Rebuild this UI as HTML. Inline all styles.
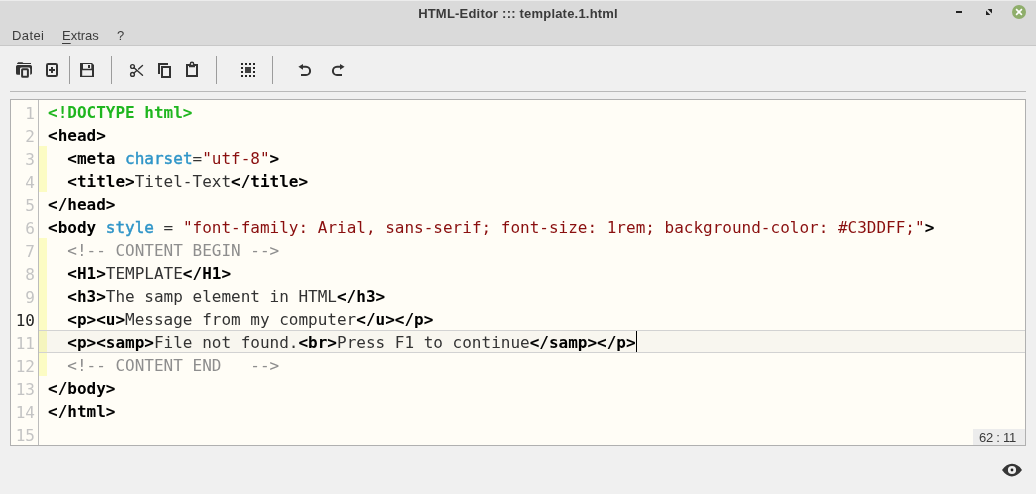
<!DOCTYPE html>
<html><head><meta charset="utf-8">
<style>
html,body{margin:0;padding:0;}
body{width:1036px;height:494px;background:#f0f0f0;position:relative;overflow:hidden;font-family:"Liberation Sans",sans-serif;}
#top{position:absolute;left:0;top:0;width:1036px;height:45px;background:#dadada;border-bottom:1px solid #c8c8c8;box-shadow:inset 0 1px 0 #ececec;}
#title{position:absolute;left:0;width:1036px;top:6px;letter-spacing:0.2px;text-align:center;font-weight:bold;font-size:13px;color:#3a3a3a;line-height:16px;}
.menu{position:absolute;top:28px;font-size:13px;color:#3c3c3c;line-height:16px;}
.sep{position:absolute;width:1px;background:#9c9c9c;top:56px;height:28px;}
#hr{position:absolute;left:10px;top:91px;width:1016px;height:1px;background:#b9b9b9;}
#ed{position:absolute;left:10px;top:99px;width:1014px;height:345px;border:1px solid #b0b0b0;background:#fffdf6;}
#gut{position:absolute;left:0;top:0;width:27px;height:345px;border-right:1px solid #bcbcbc;background:#fffdf6;}
.ln{position:absolute;margin-top:1px;left:0;width:24px;text-align:right;font-family:"DejaVu Sans Mono",monospace;font-size:16px;line-height:23px;color:#c4c4c4;height:23px;}
.ln.cur{color:#222;}
.mk{position:absolute;left:28px;width:8px;background:#fcfcc4;}
.l{position:absolute;left:37px;height:23px;line-height:23px;white-space:pre;font-family:"DejaVu Sans Mono",monospace;font-size:16px;color:#333;}
.t{font-weight:bold;color:#000;}
.d{font-weight:bold;color:#1fb61f;}
.a{color:#2f95c8;-webkit-text-stroke:0.45px #2f95c8;}
.s{color:#8a0f0f;}
.c{color:#8e8e8e;}
#curline{position:absolute;left:28px;top:230px;width:986px;height:21px;background:rgba(0,0,0,0.028);border-top:1px solid #d2d2d2;border-bottom:1px solid #d2d2d2;}
#caret{position:absolute;left:625px;top:231px;width:1px;height:21px;background:#000;}
#pos{position:absolute;right:0;bottom:0;width:52px;height:16px;background:#ececec;font-size:13px;letter-spacing:-0.25px;line-height:18px;box-sizing:border-box;padding-right:3px;overflow:hidden;text-align:center;color:#3a3a3a;}
svg{position:absolute;}
#wrap{position:absolute;left:0;top:0;width:1036px;height:494px;will-change:transform;}
</style></head><body>
<div id="wrap">
<div id="top">
<div id="title">HTML-Editor ::: template.1.html</div>
<div class="menu" style="left:12px;letter-spacing:0.4px">Datei</div>
<div class="menu" style="left:62px"><u style="text-underline-offset:3px">E</u>xtras</div>
<div class="menu" style="left:117px">?</div>
</div>
<div class="sep" style="left:69px"></div>
<div class="sep" style="left:111px"></div>
<div class="sep" style="left:216px"></div>
<div class="sep" style="left:272px"></div>
<div id="hr"></div>
<div id="ed">
<div id="gut"></div>
<div class="mk" style="top:46px;height:46px"></div>
<div class="mk" style="top:138px;height:138px"></div>
<div id="curline"></div>
<div class="ln" style="top:1px">1</div>
<div class="ln" style="top:24px">2</div>
<div class="ln" style="top:47px">3</div>
<div class="ln" style="top:70px">4</div>
<div class="ln" style="top:93px">5</div>
<div class="ln" style="top:116px">6</div>
<div class="ln" style="top:139px">7</div>
<div class="ln" style="top:162px">8</div>
<div class="ln" style="top:185px">9</div>
<div class="ln cur" style="top:208px">10</div>
<div class="ln" style="top:231px">11</div>
<div class="ln" style="top:254px">12</div>
<div class="ln" style="top:277px">13</div>
<div class="ln" style="top:300px">14</div>
<div class="ln" style="top:323px">15</div>
<div class="l" style="top:1px"><span class="d">&lt;!DOCTYPE html&gt;</span></div>
<div class="l" style="top:24px"><span class="t">&lt;head&gt;</span></div>
<div class="l" style="top:47px">  <span class="t">&lt;meta</span> <span class="a">charset</span>=<span class="s">"utf-8"</span><span class="t">&gt;</span></div>
<div class="l" style="top:70px">  <span class="t">&lt;title&gt;</span>Titel-Text<span class="t">&lt;/title&gt;</span></div>
<div class="l" style="top:93px"><span class="t">&lt;/head&gt;</span></div>
<div class="l" style="top:116px"><span class="t">&lt;body</span> <span class="a">style</span> = <span class="s">"font-family: Arial, sans-serif; font-size: 1rem; background-color: #C3DDFF;"</span><span class="t">&gt;</span></div>
<div class="l" style="top:139px">  <span class="c">&lt;!-- CONTENT BEGIN --&gt;</span></div>
<div class="l" style="top:162px">  <span class="t">&lt;H1&gt;</span>TEMPLATE<span class="t">&lt;/H1&gt;</span></div>
<div class="l" style="top:185px">  <span class="t">&lt;h3&gt;</span>The samp element in HTML<span class="t">&lt;/h3&gt;</span></div>
<div class="l" style="top:208px">  <span class="t">&lt;p&gt;&lt;u&gt;</span>Message from my computer<span class="t">&lt;/u&gt;&lt;/p&gt;</span></div>
<div class="l" style="top:231px">  <span class="t">&lt;p&gt;&lt;samp&gt;</span>File not found.<span class="t">&lt;br&gt;</span>Press F1 to continue<span class="t">&lt;/samp&gt;&lt;/p&gt;</span></div>
<div class="l" style="top:254px">  <span class="c">&lt;!-- CONTENT END   --&gt;</span></div>
<div class="l" style="top:277px"><span class="t">&lt;/body&gt;</span></div>
<div class="l" style="top:300px"><span class="t">&lt;/html&gt;</span></div>
<div id="caret"></div>
<div id="pos">62 : 11</div>
</div>

<svg id="icons" style="left:0;top:0" width="1036" height="494" viewBox="0 0 1036 494">
<g fill="#333" stroke="none">
<!-- open -->
<path d="M17 63.6 L18.2 62.2 H22.4 L23.4 63 H31 V64 H17 Z"/>
<path d="M17.6 65 H30.4 Q32 65 32 66.6 V73.2 Q32 74.6 30.2 74.8 V69 Q30.2 67.6 28.8 67.6 H21.4 Q20 67.6 20 69 V74.8 H17.6 Q16 74.8 16 73.2 V66.6 Q16 65 17.6 65 Z"/>
<rect x="22.1" y="69.2" width="5.8" height="7.6" rx="0.6" fill="none" stroke="#333" stroke-width="2"/>
<!-- new -->
<rect x="47" y="64" width="10" height="12" rx="1.2" fill="none" stroke="#333" stroke-width="2"/>
<rect x="49" y="69" width="6" height="2"/>
<rect x="51" y="67" width="2" height="6"/>
<!-- save -->
<path fill-rule="evenodd" d="M80 63 H92 L94 65 V77 H80 Z M83 64 V68.8 H91.3 V64 Z M82.2 70.2 V75.8 H92 V70.2 Z"/>
<rect x="88" y="65" width="2" height="3"/>
<!-- cut -->
<g fill="none" stroke="#333" stroke-width="1.4">
<circle cx="132.5" cy="66.5" r="1.9"/>
<circle cx="132.5" cy="74.4" r="1.9"/>
<path d="M134 67.8 L142.5 75.3" stroke-linecap="round"/>
<path d="M134 73.1 L136.8 70.6 M138.6 69 L142.5 65.5" stroke-linecap="round"/>
</g>
<!-- copy -->
<path d="M158 63 H168 V65 H160 V74 H158 Z"/>
<rect x="162" y="67" width="8" height="10" fill="none" stroke="#333" stroke-width="2"/>
<!-- paste -->
<path fill-rule="evenodd" d="M186 64 H189.6 A2.4 2.4 0 0 1 194.4 64 H198 V77 H186 Z M188 66 V75 H196 V66 H195 V67.2 H189 V66 Z M191 63.9 A1 1 0 0 0 193 63.9 A1 1 0 0 0 191 63.9 Z"/>
<!-- select all -->
<g fill="#262626">
<rect x="241" y="63" width="2" height="2"/><rect x="245" y="63" width="2" height="2"/><rect x="249" y="63" width="2" height="2"/><rect x="253" y="63" width="2" height="2"/>
<rect x="241" y="67" width="2" height="2"/><rect x="253" y="67" width="2" height="2"/>
<rect x="241" y="71" width="2" height="2"/><rect x="253" y="71" width="2" height="2"/>
<rect x="241" y="75" width="2" height="2"/><rect x="245" y="75" width="2" height="2"/><rect x="249" y="75" width="2" height="2"/><rect x="253" y="75" width="2" height="2"/>
</g>
<rect x="245" y="67" width="6" height="6" fill="#404040"/>
<!-- undo -->
<path d="M301 75 H306 A4.1 4.1 0 0 0 306 66.8 H302.5" fill="none" stroke="#333" stroke-width="2"/>
<path d="M298.4 66.8 L303 64 V69.7 Z"/>
<!-- redo -->
<path d="M342 75 H337 A4.1 4.1 0 0 1 337 66.8 H340.5" fill="none" stroke="#333" stroke-width="2"/>
<path d="M344.6 66.8 L340 64 V69.7 Z"/>
<!-- eye -->
<path fill-rule="evenodd" fill="#363636" d="M1002 470 Q1006.5 463.7 1012 463.7 Q1017.5 463.7 1022 470 Q1017.5 476.4 1012 476.4 Q1006.5 476.4 1002 470 Z M1016.1 470 A4.1 4.1 0 0 0 1007.9 470 A4.1 4.1 0 0 0 1016.1 470 Z"/>
<circle cx="1012" cy="470" r="1.4" fill="#222"/>
<!-- window buttons -->
<rect x="956" y="11" width="6" height="2" fill="#222"/>
<path d="M987.6 9 H992 V13.4 Z M986 10.6 V15 H990.4 Z" fill="#222"/>
<circle cx="1019" cy="12" r="7" fill="#8fae6b"/>
<path d="M1016.1 9.1 L1021.9 14.9 M1021.9 9.1 L1016.1 14.9" stroke="#fff" stroke-width="1.6" fill="none"/>
</g>
</svg>
</div>
</body></html>
